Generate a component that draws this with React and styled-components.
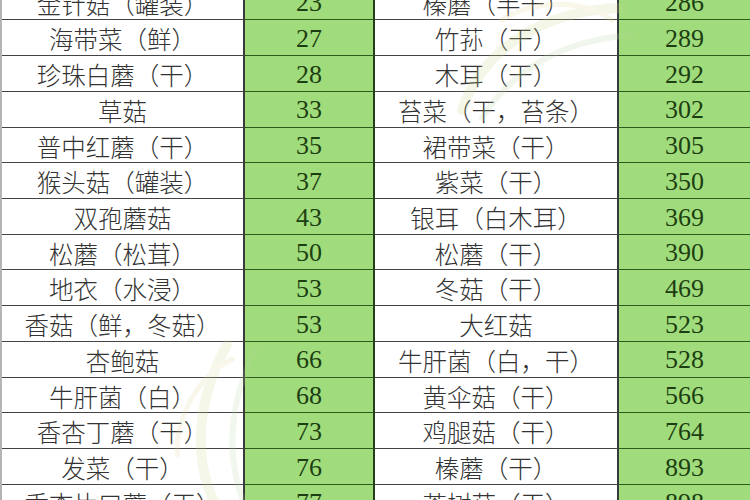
import styled, { createGlobalStyle } from "styled-components";

const rows = [
  ["金针菇（罐装）", "23", "榛蘑（半干）", "286"],
  ["海带菜（鲜）", "27", "竹荪（干）", "289"],
  ["珍珠白蘑（干）", "28", "木耳（干）", "292"],
  ["草菇", "33", "苔菜（干，苔条）", "302"],
  ["普中红蘑（干）", "35", "裙带菜（干）", "305"],
  ["猴头菇（罐装）", "37", "紫菜（干）", "350"],
  ["双孢蘑菇", "43", "银耳（白木耳）", "369"],
  ["松蘑（松茸）", "50", "松蘑（干）", "390"],
  ["地衣（水浸）", "53", "冬菇（干）", "469"],
  ["香菇（鲜，冬菇）", "53", "大红菇", "523"],
  ["杏鲍菇", "66", "牛肝菌（白，干）", "528"],
  ["牛肝菌（白）", "68", "黄伞菇（干）", "566"],
  ["香杏丁蘑（干）", "73", "鸡腿菇（干）", "764"],
  ["发菜（干）", "76", "榛蘑（干）", "893"],
  ["香杏片口蘑（干）", "77", "茶树菇（干）", "898"],
];

const Global = createGlobalStyle`
  html, body {
    margin: 0;
    padding: 0;
    background: #ffffff;
    overflow: hidden;
  }
`;

const Page = styled.div`
  position: relative;
  width: 750px;
  height: 500px;
  overflow: hidden;
  background: #ffffff;
  border-left: 2px solid #b4b4b4;
  box-sizing: border-box;
`;

const Table = styled.div`
  margin-top: -16.3px;
  display: flex;
  flex-direction: column;
`;

const Row = styled.div`
  display: grid;
  grid-template-columns: 243px 130px 244px 131px;
  height: 35.73px;
`;

const Cell = styled.div`
  box-sizing: border-box;
  display: flex;
  align-items: center;
  justify-content: center;
  border-top: 1.8px solid ${(p) => (p.$num ? "#2e5a1c" : "#444444")};
  border-right: ${(p) => (p.$last ? "none" : `2px solid ${p.$num ? "#24401a" : "#3a3a3a"}`)};
  background: ${(p) => (p.$num ? "#a0dc7b" : "#ffffff")};
  color: ${(p) => (p.$num ? "#1d3e12" : "#333333")};
  font-family: ${(p) =>
    p.$num
      ? `"Liberation Serif", "Times New Roman", serif`
      : `"Liberation Serif", "Noto Sans CJK SC", serif`};
  font-size: ${(p) => (p.$num ? "26px" : "24.5px")};
  font-weight: ${(p) => (p.$num ? 400 : 300)};
  padding-top: 1px;
  white-space: nowrap;
`;

const Watermark = styled.svg`
  position: absolute;
  pointer-events: none;
  opacity: ${(p) => p.$o};
`;

const Swirl = ({ style, o }) => (
  <Watermark $o={o} style={style} viewBox="0 0 200 140" width="200" height="140">
    <path d="M20 120 C40 60 100 20 180 18" fill="none" stroke="#c9d98a" strokeWidth="10" strokeLinecap="round" />
    <path d="M40 128 C70 80 120 50 190 45" fill="none" stroke="#b8d6a0" strokeWidth="6" strokeLinecap="round" />
    <path d="M60 30 C90 10 140 8 170 30" fill="none" stroke="#e3d59a" strokeWidth="5" strokeLinecap="round" />
  </Watermark>
);

export default function App() {
  return (
    <Page>
      <Global />
      <Table>
        {rows.map((r, i) => (
          <Row key={i}>
            <Cell>{r[0]}</Cell>
            <Cell $num>{r[1]}</Cell>
            <Cell>{r[2]}</Cell>
            <Cell $num $last>{r[3]}</Cell>
          </Row>
        ))}
      </Table>
      <Swirl o={0.2} style={{ left: 440, top: -10 }} />
      <Swirl o={0.18} style={{ left: 130, top: 370, transform: "rotate(-60deg)" }} />
    </Page>
  );
}
